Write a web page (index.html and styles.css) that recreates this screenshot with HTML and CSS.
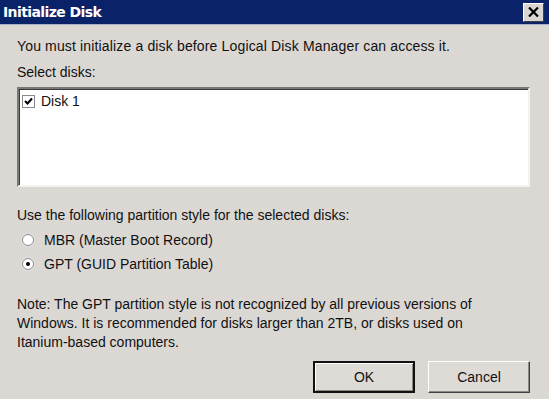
FILE: index.html
```html
<!DOCTYPE html>
<html lang="en">
<head>
  <meta charset="UTF-8">
  <title>Initialize Disk</title>
  <link rel="stylesheet" href="styles.css">
</head>
<body>
  <div class="dialog">
    <!-- Title bar -->
    <div class="titlebar">
      <span class="title">Initialize Disk</span>
      <button class="close-btn">
        <svg width="11" height="10" viewBox="0 0 11 10">
          <path d="M1 0.5 L10 9.5 M10 0.5 L1 9.5" stroke="#000" stroke-width="2.2"/>
        </svg>
      </button>
    </div>

    <div class="content">
      <p class="intro">You must initialize a disk before Logical Disk Manager can access it.</p>
      <p class="label">Select disks:</p>

      <div class="listbox">
        <div class="list-item">
          <span class="checkbox">
            <svg width="9" height="9" viewBox="0 0 9 9">
              <path d="M1 4 L3.5 6.5 L8 1.5" fill="none" stroke="#000" stroke-width="2"/>
            </svg>
          </span>
          <span>Disk 1</span>
        </div>
      </div>

      <p class="label style-label">Use the following partition style for the selected disks:</p>

      <div class="radios">
        <div class="radio-row">
          <span class="radio"></span>
          <span>MBR (Master Boot Record)</span>
        </div>
        <div class="radio-row">
          <span class="radio checked"></span>
          <span>GPT (GUID Partition Table)</span>
        </div>
      </div>

      <p class="note">Note: The GPT partition style is not recognized by all previous versions of Windows. It is recommended for disks larger than 2TB, or disks used on Itanium-based computers.</p>

      <div class="buttons">
        <button class="btn default">OK</button>
        <button class="btn">Cancel</button>
      </div>
    </div>
  </div>
</body>
</html>
```

FILE: styles.css
```css
* {
  margin: 0;
  padding: 0;
  box-sizing: border-box;
}

body {
  font-family: 'Liberation Sans', Arial, sans-serif;
  font-size: 14px;
  color: #111;
  background-color: #dbd8d4;
  width: 549px;
  height: 399px;
  overflow: hidden;
}

.dialog {
  height: 399px;
}

/* Title bar */
.titlebar {
  height: 25px;
  background-color: #0a2268;
  border-bottom: 1px solid #a8b0c8;
  display: flex;
  align-items: center;
  justify-content: space-between;
  padding: 0 5px 0 3px;
}

.title {
  color: #fff;
  font-family: 'DejaVu Sans', sans-serif;
  font-weight: bold;
  font-size: 14px;
  letter-spacing: -0.6px;
}

.close-btn {
  width: 21px;
  height: 19px;
  background-color: #d9d6d2;
  border: 1px solid;
  border-color: #fff #404040 #404040 #fff;
  display: flex;
  align-items: center;
  justify-content: center;
}

/* Content */
.content {
  padding: 12px 19px 0 17px;
}

.intro {
  line-height: 18px;
  letter-spacing: 0.15px;
}

.label {
  margin-top: 8px;
  line-height: 18px;
}

.listbox {
  margin-top: 6px;
  height: 100px;
  background-color: #fff;
  border: 2px solid;
  border-color: #7a7875 #f4f2ef #f4f2ef #7a7875;
  box-shadow: inset 1px 1px 0 #3a3a3a;
  padding: 4px 3px;
}

.list-item {
  display: flex;
  align-items: center;
  gap: 6px;
  line-height: 16px;
}

.checkbox {
  width: 13px;
  height: 13px;
  border: 1px solid #8a8a8a;
  background-color: #fff;
  display: flex;
  align-items: center;
  justify-content: center;
}

.style-label {
  margin-top: 19px;
}

/* Radios */
.radios {
  margin-top: 7px;
  padding-left: 5px;
  display: flex;
  flex-direction: column;
  gap: 6px;
}

.radio-row {
  display: flex;
  align-items: center;
  gap: 10px;
  line-height: 18px;
}

.radio {
  width: 12px;
  height: 12px;
  border-radius: 50%;
  background-color: #fff;
  border: 1px solid #8d8b88;
  box-shadow: 0 0 0 1px #e6e4e0;
  position: relative;
}

.radio.checked::after {
  content: "";
  position: absolute;
  left: 3px;
  top: 3px;
  width: 4px;
  height: 4px;
  border-radius: 50%;
  background-color: #000;
}

.note {
  margin-top: 22px;
  line-height: 19px;
  padding-right: 20px;
}

/* Buttons */
.buttons {
  display: flex;
  justify-content: flex-end;
  gap: 13px;
  margin-top: 9px;
}

.btn {
  width: 102px;
  height: 32px;
  font-family: 'Liberation Sans', Arial, sans-serif;
  font-size: 14px;
  color: #111;
  background-color: #dedbd7;
  border: 1px solid;
  border-color: #fff #404040 #404040 #fff;
  box-shadow: inset -1px -1px 0 #8a8884;
}

.btn.default {
  border: 2px solid #111;
  box-shadow: inset 1px 1px 0 #fff, inset -1px -1px 0 #8a8884;
}
```
